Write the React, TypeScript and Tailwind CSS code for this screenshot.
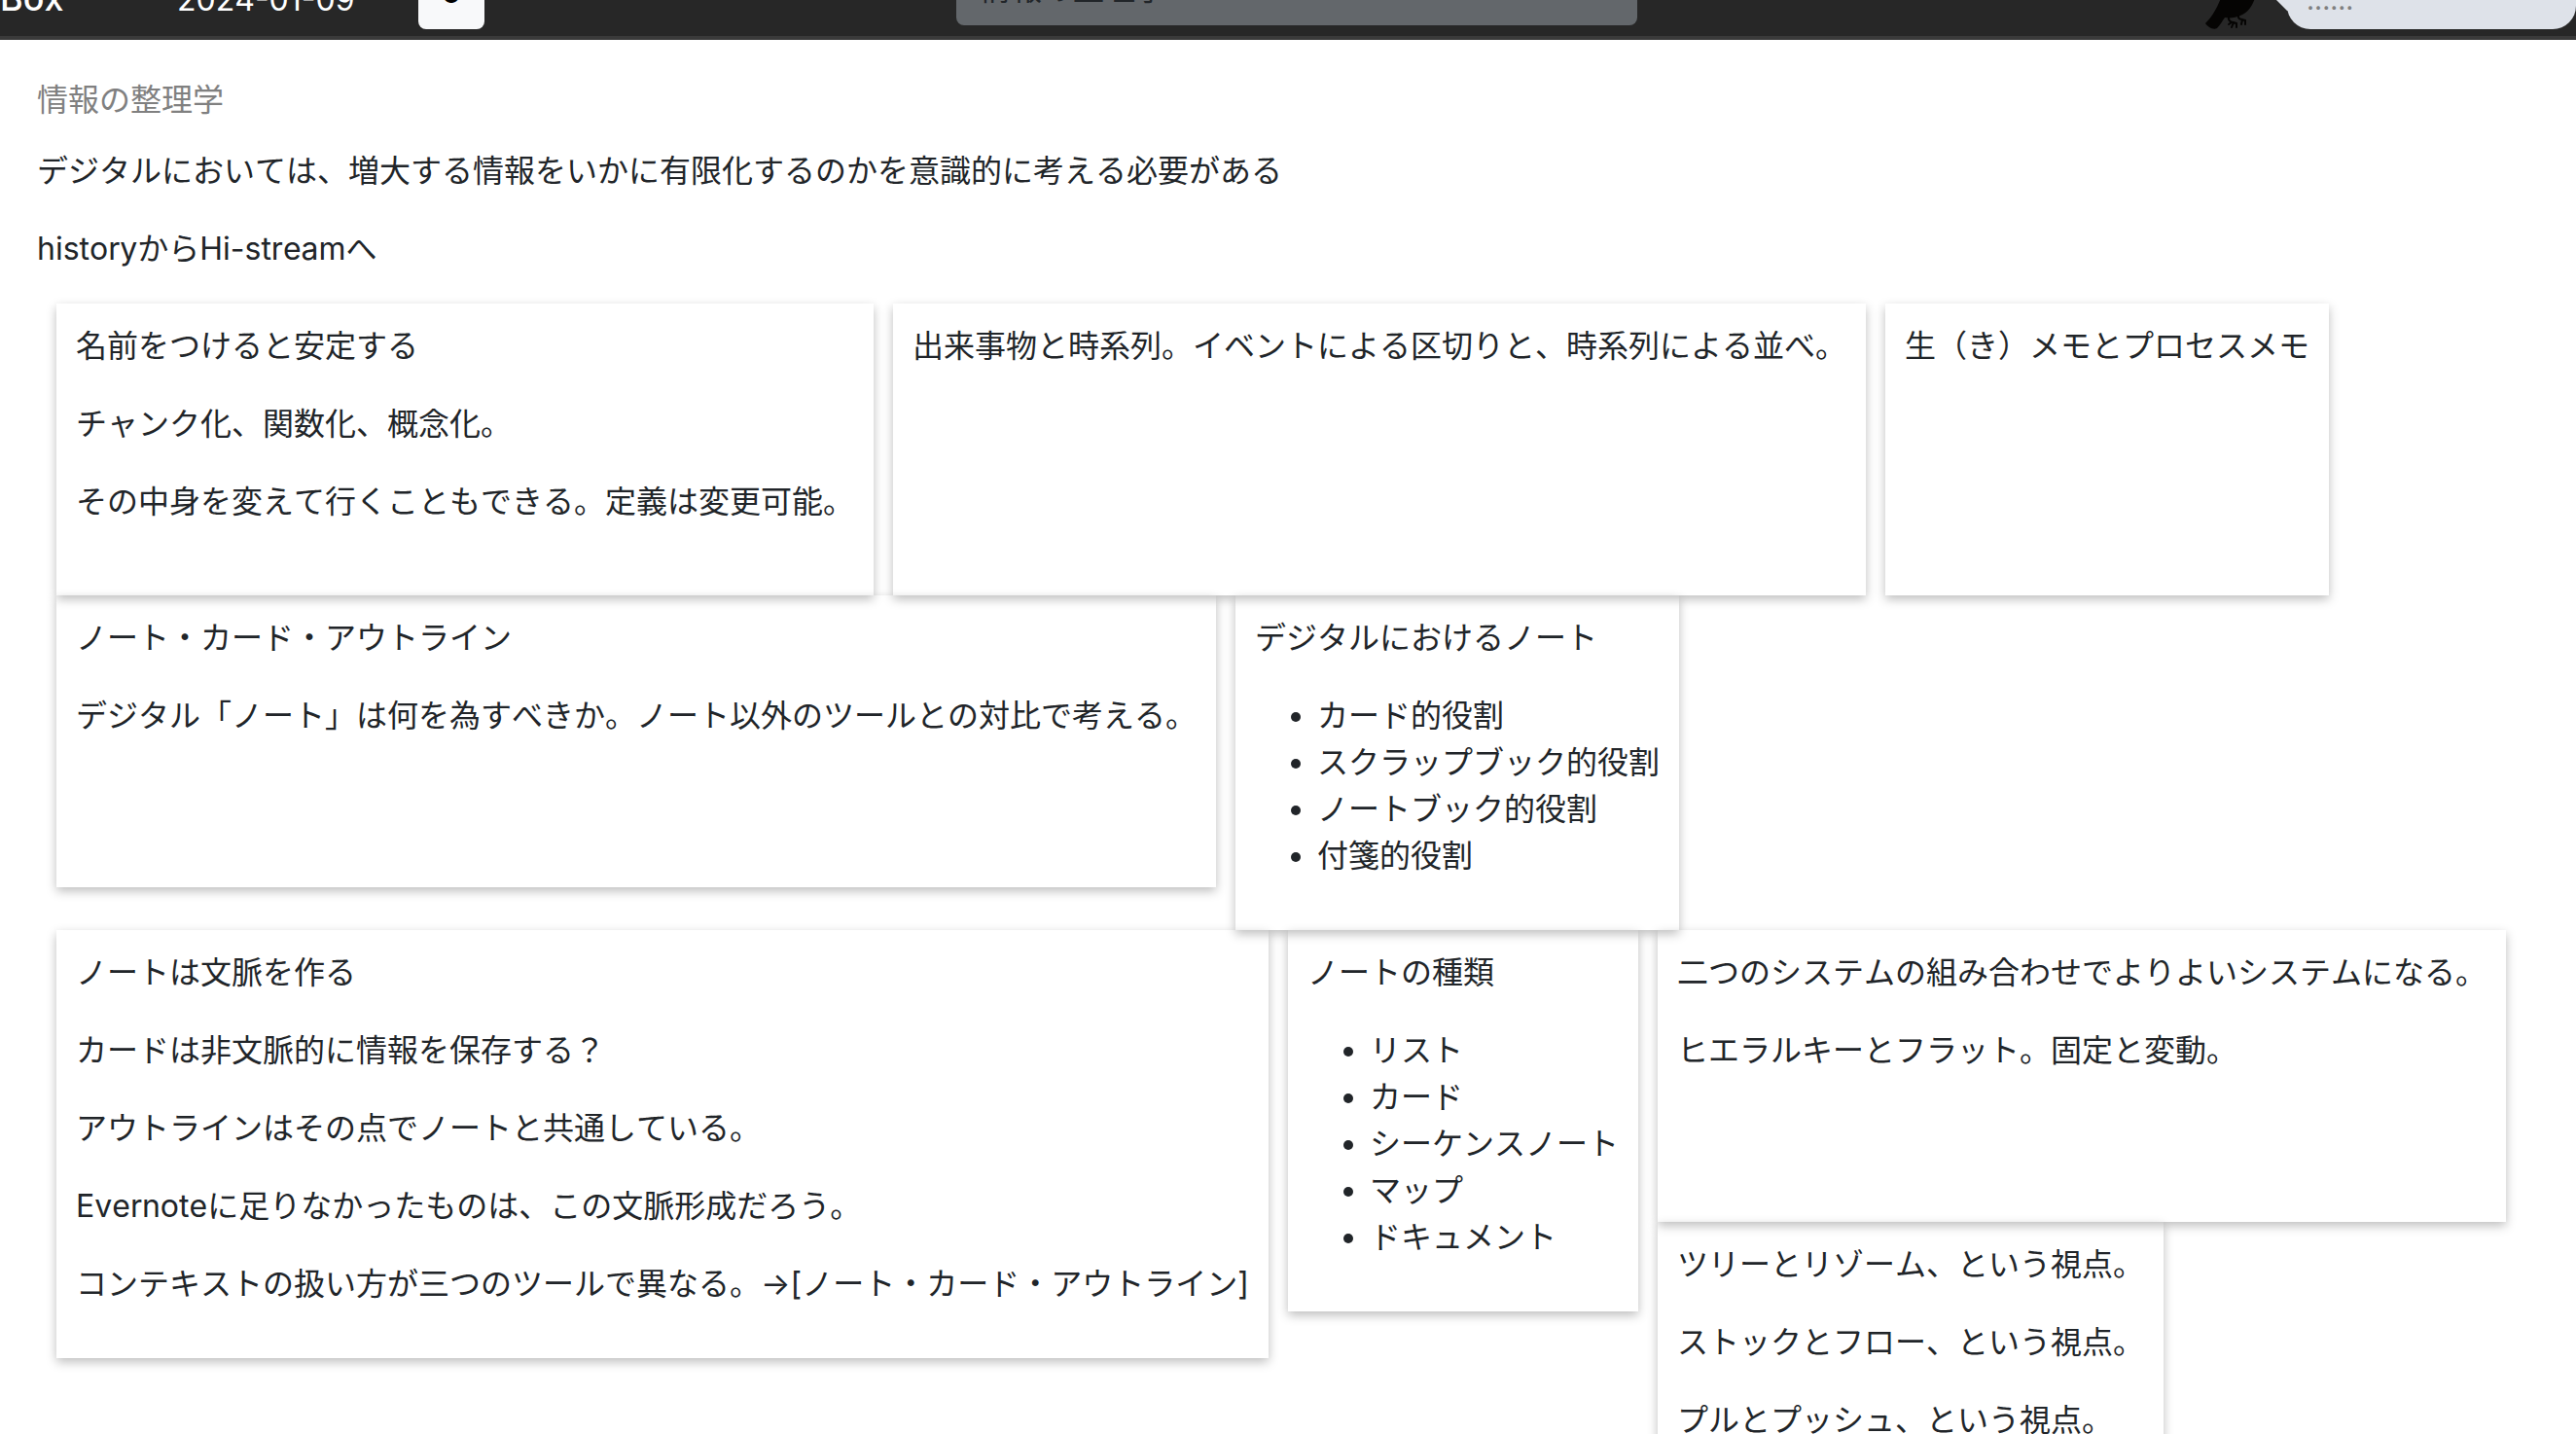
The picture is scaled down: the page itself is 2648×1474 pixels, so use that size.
import type { ReactNode } from 'react'

type Block = string | string[]

// each row holds columns, each column holds one or more stacked cards
const rows: Block[][][][] = [
  [
    [['名前をつけると安定する', 'チャンク化、関数化、概念化。', 'その中身を変えて行くこともできる。定義は変更可能。']],
    [['出来事物と時系列。イベントによる区切りと、時系列による並べ。']],
    [['生（き）メモとプロセスメモ']],
  ],
  [
    [['ノート・カード・アウトライン', 'デジタル「ノート」は何を為すべきか。ノート以外のツールとの対比で考える。']],
    [['デジタルにおけるノート', ['カード的役割', 'スクラップブック的役割', 'ノートブック的役割', '付箋的役割']]],
  ],
  [
    [
      [
        'ノートは文脈を作る',
        'カードは非文脈的に情報を保存する？',
        'アウトラインはその点でノートと共通している。',
        'Evernoteに足りなかったものは、この文脈形成だろう。',
        'コンテキストの扱い方が三つのツールで異なる。→[ノート・カード・アウトライン]',
      ],
    ],
    [['ノートの種類', ['リスト', 'カード', 'シーケンスノート', 'マップ', 'ドキュメント']]],
    [
      ['二つのシステムの組み合わせでよりよいシステムになる。', 'ヒエラルキーとフラット。固定と変動。'],
      ['ツリーとリゾーム、という視点。', 'ストックとフロー、という視点。', 'プルとプッシュ、という視点。'],
    ],
  ],
]

function Card({ children }: { children: ReactNode }) {
  return (
    <article className="w-fit min-h-[300px] p-5 whitespace-nowrap shadow-[0_4px_10px_rgba(0,0,0,0.26)]">
      {children}
    </article>
  )
}

function CardBody({ blocks }: { blocks: Block[] }) {
  return (
    <>
      {blocks.map((block, i) =>
        Array.isArray(block) ? (
          <ul key={i} className="mb-8 list-disc pl-16">
            {block.map((item) => (
              <li key={item}>{item}</li>
            ))}
          </ul>
        ) : (
          <p key={i} className="mb-8">{block}</p>
        )
      )}
    </>
  )
}

function Crow() {
  return (
    <svg viewBox="0 0 80 80" className="h-20 w-20" fill="#050403" aria-hidden="true">
      <path d="M42 6c6-6 16-4 18 3l6 4-7 2c-2 6-1 14-2 22-1 11-5 24-17 29-5 2-10 3-16 2-3 4-5 8-8 11-4 2-9-1-12-5 8-8 12-16 16-26C24 34 30 22 42 6z" />
      <path
        d="M28 67c-1 4 2 6 5 6l3 1v4m-3-5l-2 5m0-5l-3 2M38 66c-1 3 2 4 4 4l3 1v4m-3-5l-1 5"
        fill="none"
        stroke="#050403"
        strokeWidth="2"
        strokeLinecap="round"
      />
    </svg>
  )
}

export default function App() {
  return (
    <div className="h-screen overflow-hidden bg-white font-[Inter,'Noto_Sans_CJK_JP',sans-serif] text-[32px] leading-[48px] text-[#212529] [font-kerning:none]">
      {/* the bar is scrolled most of the way off the top */}
      <header className="-mt-[71px] flex h-28 items-end border-b-4 border-[#3a3a3a] bg-[#272727] pb-[7px] text-white">
        <a href="#home" className="w-[182px] pb-2 text-[36px] font-medium">Box</a>
        <time className="w-[248px] pb-1.5">2024-01-09</time>
        <button className="h-[76px] w-[68px] rounded-lg bg-[#f8f9fa] font-medium text-black">o</button>
        <input
          aria-label="タイトル"
          placeholder="情報の整理学"
          className="mb-1 ml-[485px] h-[76px] w-[700px] rounded-lg bg-[#63676b] px-6 placeholder:text-[#212529]"
        />
        <div className="ml-auto flex items-end">
          <Crow />
          <div className="relative ml-2 flex h-[90px] w-[297px] items-end rounded-3xl bg-[#dee2e9] px-5 pb-1.5 text-[28px] text-[#808080]">
            {/* tail pointing at the crow */}
            <svg viewBox="0 0 32 32" className="absolute bottom-[18px] -left-6 h-8 w-8" fill="#dee2e9" aria-hidden="true">
              <path d="M0 7l24 24h8V0H0z" />
            </svg>
            ......
          </div>
        </div>
      </header>

      <main className="px-[38px] pt-[38px]">
        <h1 className="text-[#808080]">情報の整理学</h1>
        <p className="mt-[25px] mb-8">デジタルにおいては、増大する情報をいかに有限化するのかを意識的に考える必要がある</p>
        <p className="mb-8">historyからHi-streamへ</p>
        {rows.map((columns, r) => (
          <section key={r} className="flex items-start gap-5 px-5">
            {columns.map((cards, c) => (
              <div key={c}>
                {cards.map((blocks, i) => (
                  <Card key={i}>
                    <CardBody blocks={blocks} />
                  </Card>
                ))}
              </div>
            ))}
          </section>
        ))}
      </main>
    </div>
  )
}
